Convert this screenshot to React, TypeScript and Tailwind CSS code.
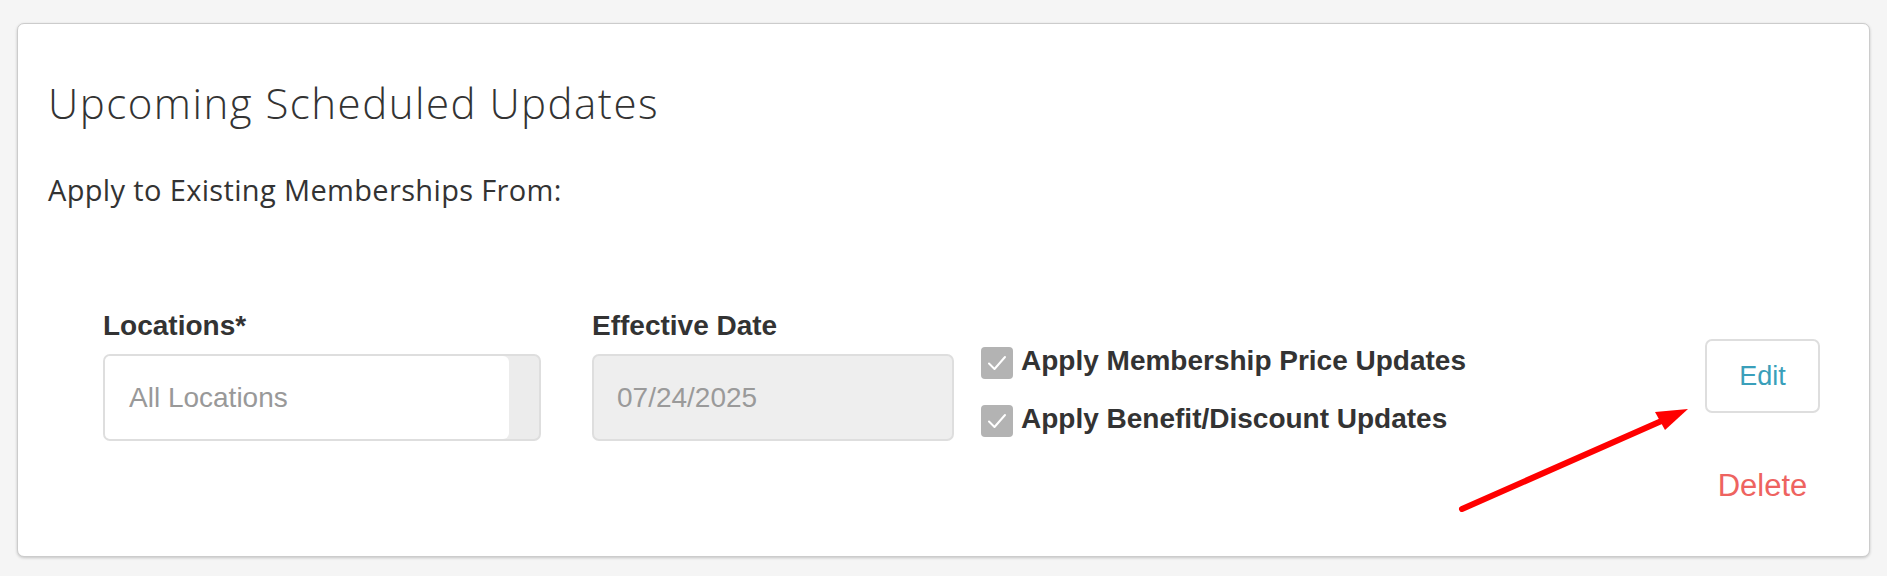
import React from 'react';

const CheckRow = ({ label }: { label: string }) => (
    <div className="flex items-center h-[32px]">
        <span className="w-[32px] h-[32px] rounded-[4px] bg-[#b3b3b3] flex items-center justify-center shrink-0">
            <svg width="22" height="22" viewBox="0 0 22 22" fill="none">
                <path d="M3 11.5 L8.5 17 L19 5" stroke="#ffffff" strokeWidth="2" strokeLinecap="round" strokeLinejoin="round" />
            </svg>
        </span>
        <span className="ml-[8px] text-[28px] font-bold text-[#333333] leading-none -mt-[5px]">{label}</span>
    </div>
);

export default function App() {
    return (
        <div className="relative w-[1887px] h-[576px] bg-[#f5f5f5] overflow-hidden pt-[23px] pl-[17px] font-['Liberation_Sans',Arial,sans-serif]">
            {/* Card */}
            <div className="w-[1853px] h-[534px] bg-white border border-[#cccccc] rounded-[7px] shadow-[0_1px_3px_rgba(0,0,0,0.2)] pt-[58px] pl-[30px] pr-[49px]">
                <h1 className="font-['Open_Sans',sans-serif] font-light text-[42px] leading-[42px] tracking-[1.5px] text-[#333333]">
                    Upcoming Scheduled Updates
                </h1>
                <p className="mt-[52px] font-['Open_Sans',sans-serif] text-[29px] leading-[28px] tracking-[0.35px] text-[#333333]">
                    Apply to Existing Memberships From:
                </p>

                {/* Filters row */}
                <div className="flex items-start mt-[108px] pl-[55px]">
                    <div className="w-[438px]">
                        <div className="text-[28px] leading-[28px] font-bold text-[#333333]">Locations*</div>
                        <div className="mt-[14px] h-[87px] border-2 border-[#dedede] rounded-[7px] flex overflow-hidden bg-[#ececec]">
                            <div className="flex-1 bg-white rounded-r-[6px] flex items-center pl-[24px] text-[28px] text-[#999999]">
                                All Locations
                            </div>
                            <div className="w-[30px]" />
                        </div>
                    </div>

                    <div className="w-[362px] ml-[51px]">
                        <div className="text-[28px] leading-[28px] font-bold text-[#333333]">Effective Date</div>
                        <div className="mt-[14px] h-[87px] border-2 border-[#dedede] rounded-[7px] bg-[#eeeeee] flex items-center pl-[23px] text-[28px] text-[#9a9a9a]">
                            07/24/2025
                        </div>
                    </div>

                    <div className="ml-[27px] pt-[35px] flex flex-col gap-[26px]">
                        <CheckRow label="Apply Membership Price Updates" />
                        <CheckRow label="Apply Benefit/Discount Updates" />
                    </div>

                    <div className="ml-auto pt-[27px] flex flex-col items-center">
                        <button className="w-[115px] h-[74px] border-2 border-[#dedede] rounded-[7px] bg-white text-[27px] text-[#3a9fba] flex items-center justify-center">
                            Edit
                        </button>
                        <button className="mt-[57px] text-[31px] leading-[31px] text-[#ee6360]">Delete</button>
                    </div>
                </div>
            </div>

            {/* Annotation arrow */}
            <svg className="absolute left-0 top-0 pointer-events-none" width="1887" height="576" viewBox="0 0 1887 576">
                <line x1="1462" y1="509" x2="1666" y2="419" stroke="#ff0000" strokeWidth="6" strokeLinecap="round" />
                <polygon points="1688,409 1655,412 1665,430" fill="#ff0000" />
            </svg>
        </div>
    );
}
